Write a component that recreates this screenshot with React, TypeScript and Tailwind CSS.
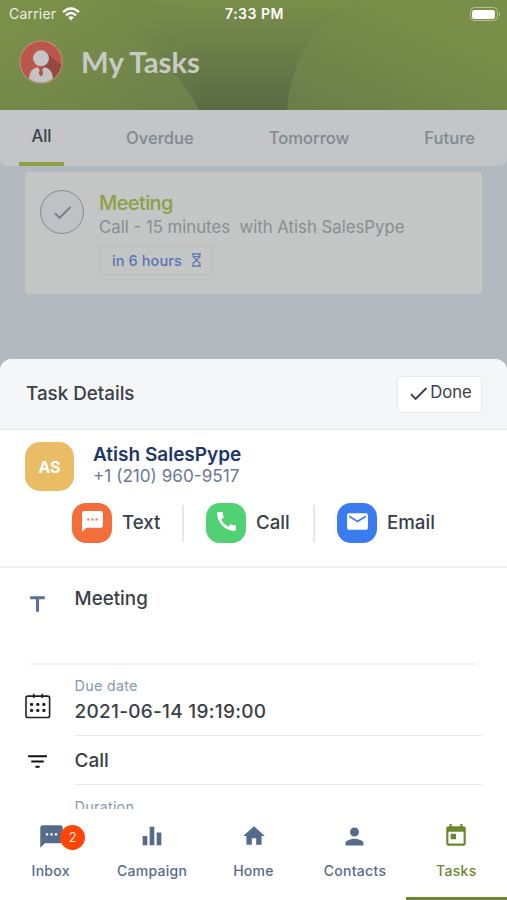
import type { ReactNode } from 'react';
import {
  MdCheck,
  MdSms,
  MdCall,
  MdEmail,
  MdTitle,
  MdFilterList,
  MdHome,
  MdPerson,
  MdEqualizer,
  MdToday,
} from 'react-icons/md';

function StatusBar() {
  return (
    <div className="grid h-7 grid-cols-3 items-center pl-[9px] pr-[7px] text-[14px] leading-7 text-[#eceee8]">
      <div className="flex items-center gap-[6px]">
        <span className="w-[47px] tracking-[0.2px]">Carrier</span>
        <svg width="18" height="14" viewBox="0 0 18 14" fill="none" stroke="#fff" strokeWidth="2.3">
          <path d="M1 5.1Q9 -2.2 17 5.1" />
          <path d="M4 8.3Q9 3.8 14 8.3" />
          <path d="M6.2 10.4Q9 8 11.8 10.4L9 13.4Z" fill="#fff" stroke="none" />
        </svg>
      </div>
      <span className="whitespace-nowrap text-center font-semibold tracking-[0.5px] text-white">7:33 PM</span>
      <div className="flex items-center justify-end gap-px">
        <div className="h-[14px] w-[28px] rounded-[4.5px] border border-[#b5c28c] p-[1.5px]">
          <div className="h-full rounded-[2.5px] bg-white" />
        </div>
        <div className="h-1 w-[1.5px] rounded-r bg-[#b5c28c]" />
      </div>
    </div>
  );
}

function HeaderShapes() {
  return (
    <svg className="absolute inset-0" width="507" height="110" viewBox="0 0 507 110">
      <defs>
        <linearGradient id="left" gradientUnits="userSpaceOnUse" x1="60" y1="0" x2="150" y2="150">
          <stop offset="0" stopColor="#7a9049" />
          <stop offset="1" stopColor="#6c7e4b" />
        </linearGradient>
        <linearGradient id="dark" gradientUnits="userSpaceOnUse" x1="0" y1="0" x2="0" y2="110">
          <stop offset="0" stopColor="#798f49" />
          <stop offset="0.3" stopColor="#70834a" />
          <stop offset="0.6" stopColor="#677947" />
          <stop offset="1" stopColor="#5a6b44" />
        </linearGradient>
        <linearGradient id="shade" gradientUnits="userSpaceOnUse" x1="120" y1="0" x2="200" y2="0">
          <stop offset="0" stopColor="#fff" stopOpacity="0" />
          <stop offset="1" stopColor="#fff" />
        </linearGradient>
        <mask id="soft" maskUnits="userSpaceOnUse" x="0" y="0" width="507" height="110">
          <rect width="507" height="110" fill="url(#shade)" />
        </mask>
        <linearGradient id="right" gradientUnits="userSpaceOnUse" x1="420" y1="20" x2="370" y2="135">
          <stop offset="0" stopColor="#798f49" />
          <stop offset="1" stopColor="#6b7e4a" />
        </linearGradient>
      </defs>
      <rect width="507" height="110" fill="url(#left)" />
      <path d="M100 0H359V110H199Q178 66 130 38Z" fill="url(#dark)" mask="url(#soft)" />
      <path d="M287 110Q291 66 312 36Q330 12 350 0H507V110Z" fill="url(#right)" />
    </svg>
  );
}

function Avatar() {
  return (
    <svg width="44" height="44" viewBox="0 0 44 44">
      <defs>
        <clipPath id="face">
          <circle cx="22" cy="22" r="20.5" />
        </clipPath>
      </defs>
      <circle cx="22" cy="22" r="21.6" fill="#c09a78" />
      <circle cx="22" cy="22" r="20.7" fill="#bb564d" />
      <g clipPath="url(#face)">
        <path d="M28 14L44 26V44H30L24 30Z" fill="#954741" />
        <path d="M10 44V38Q11 29 17.5 27.5H26.5Q33 29 34 38V44Z" fill="#c3c3c4" />
        <path d="M19 27H25L23.4 30L24.2 34L22 36.5L19.8 34L20.6 30Z" fill="#b5534b" />
        <circle cx="22" cy="18.3" r="8" fill="#c5c5c6" />
      </g>
    </svg>
  );
}

function CalendarDots() {
  return (
    <svg width="26" height="26" viewBox="0 0 26 26" fill="none" stroke="#202124">
      <rect x="1" y="3.1" width="23.6" height="21.4" rx="1.8" strokeWidth="1.6" />
      <path d="M8.7 0.8V5M17.2 0.8V5" strokeWidth="1.6" />
      <path
        d="M6.6 11.4h.01M12.8 11.4h.01M18.9 11.4h.01M6.6 17.4h.01M12.8 17.4h.01M18.9 17.4h.01"
        strokeWidth="3.4"
        strokeLinecap="round"
      />
    </svg>
  );
}

function Hourglass() {
  return (
    <svg width="9" height="14" viewBox="0 0 9 14" fill="none" stroke="#5775b4" strokeWidth="1.2">
      <path d="M0 .8H9M0 13.2H9M1.2 1V4L4 6.3V7.7L1.2 10V13M7.8 1V4L5 6.3V7.7L7.8 10V13M2 3.5H7" />
    </svg>
  );
}

function Tile({ color, children }: { color: string; children: ReactNode }) {
  return (
    <span className={`flex size-10 shrink-0 items-center justify-center rounded-[14px] text-white ${color}`}>
      {children}
    </span>
  );
}

function NavItem({ label, active, children }: { label: string; active?: boolean; children: ReactNode }) {
  return (
    <div
      className={`flex flex-1 flex-col items-center border-b-[3px] pt-[15px] text-[14px] font-medium ${
        active ? 'border-[#6d8730] text-[#6d8730]' : 'border-transparent text-[#566b8b]'
      }`}
    >
      <span className="relative flex h-6 items-center">{children}</span>
      <span className="mt-[13px] leading-5 tracking-[0.3px]">{label}</span>
    </div>
  );
}

export default function App() {
  return (
    <div className="flex h-[900px] w-[507px] flex-col overflow-hidden bg-[#b3b9be] font-['Inter',sans-serif]">
      <header className="relative h-[110px] shrink-0">
        <HeaderShapes />
        <div className="relative">
          <StatusBar />
          <div className="flex items-center gap-[18px] pl-[19px] pt-3">
            <Avatar />
            <h1 className="font-['Lato',sans-serif] text-[29.3px] font-bold leading-[44px] text-[#c8cbc3]">
              My Tasks
            </h1>
          </div>
        </div>
      </header>

      <nav className="flex h-[56px] shrink-0 rounded-b-lg bg-[#c4c5c6] text-[16.6px] font-medium leading-6 text-[#818990]">
        <div className="ml-[19px] flex w-[45px] flex-col items-center border-b-4 border-[#8ba144] pt-[14px] text-[#3c4248]">
          All
        </div>
        <span className="ml-[62px] mt-4">Overdue</span>
        <span className="ml-[75px] mt-4">Tomorrow</span>
        <span className="ml-[75px] mt-4">Future</span>
      </nav>

      <section className="mx-[25px] mt-1.5 flex h-[122px] shrink-0 rounded-[4px] bg-[#c4c5c5] pl-[15px]">
        <div className="mt-[18px] flex size-11 items-center justify-center rounded-full border-[1.5px] border-[#858b91] bg-[#bfc2c4] text-[#747c88]">
          <MdCheck size={23} />
        </div>
        <div className="ml-[15px] pt-[19px]">
          <h2 className="text-[20px] font-medium leading-6 tracking-[-0.6px] text-[#8ba144]">Meeting</h2>
          <p className="whitespace-pre text-[16.75px] leading-6 text-[#8b8d90]">Call - 15 minutes  with Atish SalesPype</p>
          <div className="mt-[7px] flex h-[29px] w-[113px] items-center gap-[10px] rounded-[3px] border border-[#b8bbbd] pl-[12px] text-[14.5px] font-medium text-[#5775b4]">
            <span className="whitespace-nowrap tracking-[0.1px]">in 6 hours</span>
            <span className="-mt-0.5">
              <Hourglass />
            </span>
          </div>
        </div>
      </section>

      <main className="mt-[65px] flex h-[450px] shrink-0 flex-col overflow-hidden rounded-t-xl bg-white text-[#3b4047]">
        <div className="flex h-[71px] shrink-0 items-center justify-between border-b border-[#e9ebed] bg-[#f4f6f8] pl-[26px] pr-[25px]">
          <h2 className="text-[18.8px] font-medium">Task Details</h2>
          <button className="flex h-[37px] w-[85px] items-center justify-center rounded-[4px] border border-[#e8eaec] bg-white text-[16.7px]">
            <MdCheck size={23} className="-mt-px" />
            <span className="pb-[3px]">Done</span>
          </button>
        </div>

        <div className="h-[138px] shrink-0 border-b-2 border-[#f0f1f2] pt-3">
          <div className="flex pl-[25px]">
            <span className="flex size-[49px] items-center justify-center rounded-[15px] bg-[#eabc65] text-[16px] font-bold text-white">
              AS
            </span>
            <div className="ml-[19px] pt-px">
              <div className="text-[19px] font-semibold leading-6 text-[#1d3766]">Atish SalesPype</div>
              <div className="-mt-px text-[17.15px] leading-5 text-[#6c7894]">+1 (210) 960-9517</div>
            </div>
          </div>
          <div className="mt-3 flex items-center pl-[72px] text-[18.7px] font-medium leading-10">
            <Tile color="bg-[#f26f3c]"><MdSms size={25} className="mb-[3px]" /></Tile>
            <span className="ml-[10px] w-[60px]">Text</span>
            <span className="h-[37px] w-[2px] bg-[#e6e7e9]" />
            <Tile color="ml-[22px] bg-[#50d174]"><MdCall size={25} className="mb-1" /></Tile>
            <span className="ml-[10px] w-[57px]">Call</span>
            <span className="h-[37px] w-[2px] bg-[#e6e7e9]" />
            <Tile color="ml-[22px] bg-[#3a7cf0]"><MdEmail size={25} className="mb-[3px]" /></Tile>
            <span className="ml-[10px]">Email</span>
          </div>
        </div>

        <div className="mx-[31px] flex h-[97px] shrink-0 border-b-2 border-[#f0f1f2] text-[18.8px]">
          <MdTitle size={25} className="-ml-[6px] mt-6 text-[#5b6f9b]" />
          <span className="ml-[24.5px] mt-[19px] font-medium leading-6">Meeting</span>
        </div>

        <div className="mr-[25px] flex h-[71px] shrink-0 pl-[25px]">
          <span className="mt-[28px]"><CalendarDots /></span>
          <div className="ml-[23.5px] flex-1 border-b border-[#e5e7e9] pt-[11px]">
            <div className="text-[14.5px] leading-5 tracking-[0.2px] text-[#8999aa]">Due date</div>
            <div className="mt-1 text-[19px] font-medium leading-6 tracking-[0.28px]">2021-06-14 19:19:00</div>
          </div>
        </div>
        <div className="mr-[25px] flex h-[49px] shrink-0 pl-[25px]">
          <MdFilterList size={25} className="mt-[13px] text-[#111]" />
          <div className="ml-[24.5px] flex-1 border-b border-[#e5e7e9] pt-[13px] text-[19px] font-medium leading-6">Call</div>
        </div>
        <div className="shrink-0 pl-[74.5px] pt-3 text-[14.5px] leading-5 tracking-[0.2px] text-[#8999aa]">Duration</div>
      </main>

      <footer className="flex h-[91px] shrink-0 bg-white">
        <NavItem label="Inbox">
          <MdSms size={27} className="translate-x-px" />
          <span className="absolute left-[23px] top-px flex size-[25px] items-center justify-center rounded-full bg-[#fb4608] text-[13px] font-normal text-[#ffe4d8]">
            2
          </span>
        </NavItem>
        <NavItem label="Campaign"><MdEqualizer size={28} /></NavItem>
        <NavItem label="Home"><MdHome size={26} /></NavItem>
        <NavItem label="Contacts"><MdPerson size={27} /></NavItem>
        <NavItem label="Tasks" active><MdToday size={26} /></NavItem>
      </footer>
    </div>
  );
}
